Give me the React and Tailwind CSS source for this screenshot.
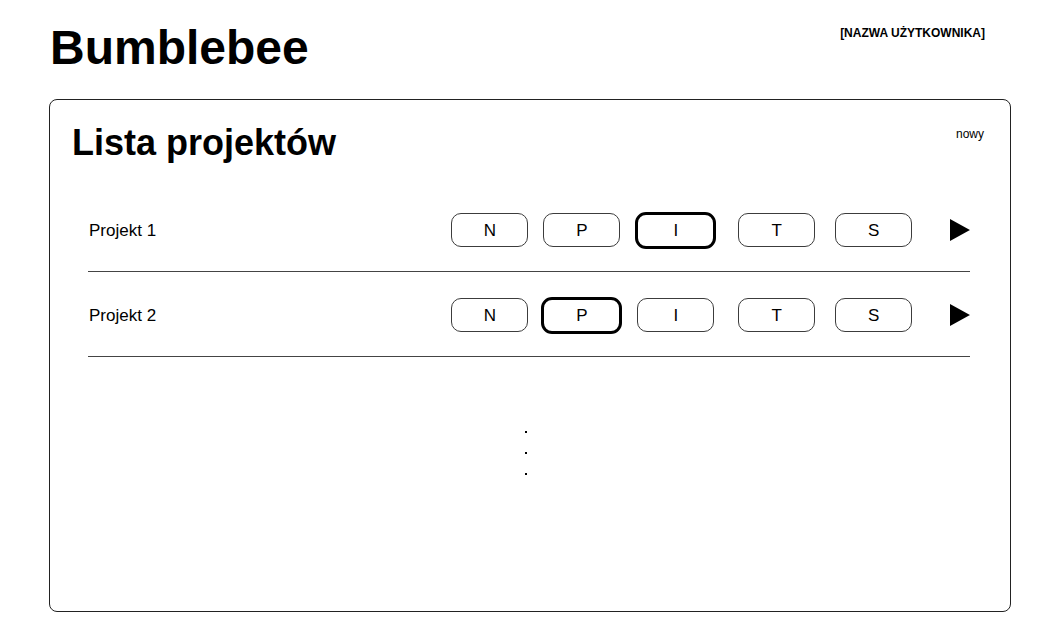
import React from "react";

const projects = [
  { name: "Projekt 1", active: "I" },
  { name: "Projekt 2", active: "P" },
];

const stages = [
  { key: "N", ml: "ml-0" },
  { key: "P", ml: "ml-[11px]" },
  { key: "I", ml: "ml-[13px]" },
  { key: "T", ml: "ml-[20px]" },
  { key: "S", ml: "ml-[16px]" },
];

const Stage = ({ label, active, ml }) => (
  <div className={`w-[81px] flex justify-center ${ml}`}>
    {active ? (
      <div className="w-[81px] h-[37px] border-[3px] border-black rounded-[11px] flex items-center justify-center text-[17px] leading-none">
        {label}
      </div>
    ) : (
      <div className="w-[77px] h-[34px] border border-[#3c3c3c] rounded-[10px] flex items-center justify-center text-[17px] leading-none">
        {label}
      </div>
    )}
  </div>
);

const ProjectRow = ({ project }) => (
  <div className="h-[85px] pt-[2px] flex items-center border-b border-[#444]">
    <div className="w-[362px] pl-[1px] text-[17px] leading-none">{project.name}</div>
    {stages.map((s) => (
      <Stage key={s.key} label={s.key} ml={s.ml} active={project.active === s.key} />
    ))}
    {/* open project */}
    <svg className="ml-[36px]" width="20" height="22" viewBox="0 0 20 22">
      <polygon points="0,0 20,11 0,22" fill="black" />
    </svg>
  </div>
);

export default function App() {
  return (
    <div className="w-[1060px] h-[639px] bg-white text-black font-['Liberation_Sans',Arial,sans-serif]">
      {/* Header */}
      <header className="flex items-start justify-between pl-[50px] pr-[75px]">
        <h1 className="mt-[24px] text-[48px] font-bold leading-none">Bumblebee</h1>
        <div className="mt-[27px] text-[12px] font-bold leading-none">[NAZWA UŻYTKOWNIKA]</div>
      </header>

      {/* Project list */}
      <main className="ml-[49px] mt-[27px] w-[962px] h-[513px] border border-[#222] rounded-[8px] pt-[25px]">
        <div className="flex items-start justify-between pl-[22px] pr-[26px]">
          <h2 className="text-[36px] font-bold leading-none">Lista projektów</h2>
          <div className="mt-[3px] text-[12px] leading-none">nowy</div>
        </div>

        <div className="ml-[38px] w-[882px] mt-[26px]">
          {projects.map((p) => (
            <ProjectRow key={p.name} project={p} />
          ))}
        </div>

        <div className="ml-[475px] mt-[74px] flex flex-col gap-[19px]">
          <div className="w-[2px] h-[2px] bg-black" />
          <div className="w-[2px] h-[2px] bg-black" />
          <div className="w-[2px] h-[2px] bg-black" />
        </div>
      </main>
    </div>
  );
}
